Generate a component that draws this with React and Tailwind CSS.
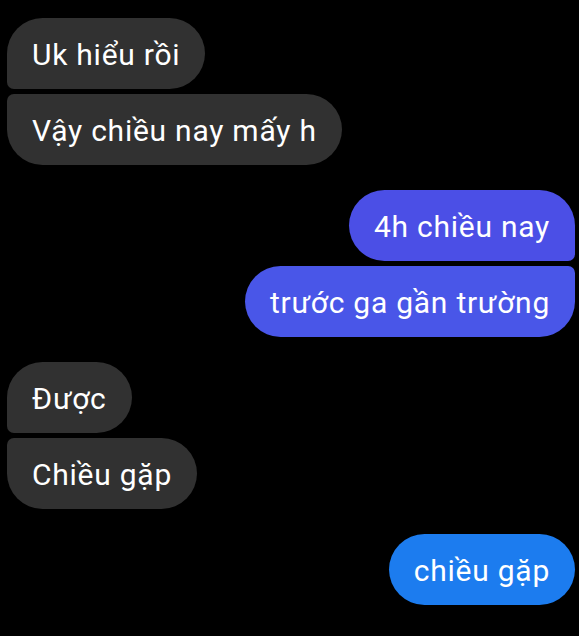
import React from 'react';

const groups = [
  { side: 'left', items: ['Uk hiểu rồi', 'Vậy chiều nay mấy h'] },
  { side: 'right', items: ['4h chiều nay', 'trước ga gần trường'], colors: ['bg-[#4b4fe6]', 'bg-[#4956e8]'] },
  { side: 'left', items: ['Được', 'Chiều gặp'] },
  { side: 'right', items: ['chiều gặp'], colors: ['bg-[#1c7cef]'] },
];

const Bubble = ({ text, side, pos, count, color }) => {
  // corners: the side facing the sender is squared where bubbles touch
  let corners = 'rounded-[36px]';
  if (count > 1) {
    if (side === 'left') {
      corners = pos === 0 ? 'rounded-[36px] rounded-bl-[7px]' : 'rounded-[36px] rounded-tl-[7px]';
    } else {
      corners = pos === 0 ? 'rounded-[36px] rounded-br-[7px]' : 'rounded-[36px] rounded-tr-[7px]';
    }
  }
  const bg = side === 'left' ? 'bg-[#313131]' : color;
  return (
    <div className={`h-[71px] flex items-center px-[25px] pt-[3px] text-white text-[30px] tracking-[0.75px] leading-none ${bg} ${corners}`}>
      {text}
    </div>
  );
};

export default function App() {
  return (
    <div className="min-h-screen w-full bg-black pt-[18px] flex flex-col gap-[25px]" style={{ fontFamily: 'Roboto, "Noto Sans", sans-serif' }}>
      {groups.map((g, gi) => (
        <div key={gi} className={`flex flex-col gap-[5px] ${g.side === 'left' ? 'items-start pl-[7px]' : 'items-end pr-[4px]'}`}>
          {g.items.map((t, i) => (
            <Bubble key={i} text={t} side={g.side} pos={i} count={g.items.length} color={g.colors ? g.colors[i] : ''} />
          ))}
        </div>
      ))}
    </div>
  );
}
